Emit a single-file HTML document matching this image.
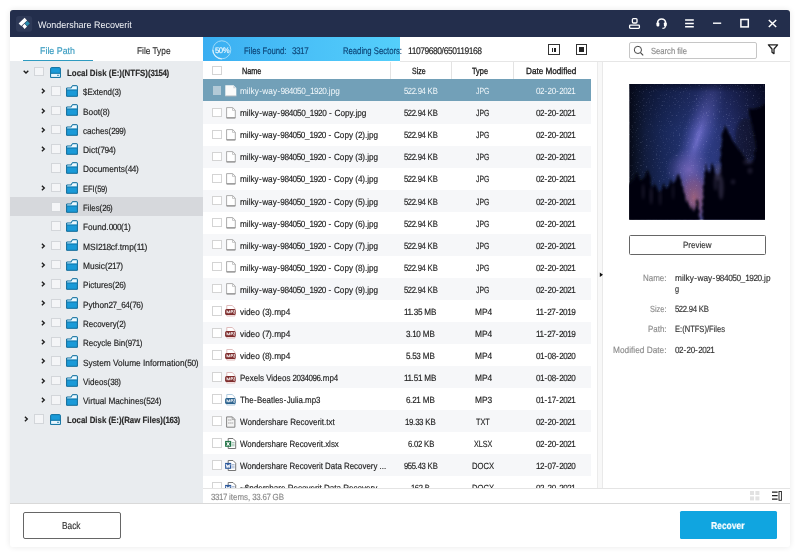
<!DOCTYPE html>
<html lang="en"><head><meta charset="utf-8"><title>Wondershare Recoverit</title>
<style>html,body{margin:0;padding:0;}body{width:800px;height:556px;overflow:hidden;background:#fff;position:relative;font-family:"Liberation Sans",sans-serif;}div,svg,i,.t,header,nav,main,aside,footer,section{position:absolute;display:block;}header,nav,main,aside,footer,section{left:0;top:0;width:0;height:0;}.t{white-space:pre;line-height:12px;text-rendering:geometricPrecision;transform-origin:0 50%;-webkit-text-stroke:0.16px;}#app{left:0;top:0;width:800px;height:556px;will-change:transform;}</style></head>
<body>
<div id="app">
<div style="left:10px;top:10px;width:780px;height:537px;background:#fff;border-radius:3px;box-shadow:0 0 6px rgba(0,0,0,.09);"></div>
<header>
<div style="left:10px;top:10px;width:780px;height:27px;background:#232e4c;border-radius:3px 3px 0 0;"></div>
<svg style="left:16px;top:16px;" width="17" height="16" viewBox="0 0 17 16"><rect x="0" y="0" width="16.2" height="15.7" rx="3" fill="#2e3957"/><path d="M8.6 1.8 L2.6 7.4 L5.3 10 L11.1 4.6 Z" fill="#fff"/><path d="M8.6 7.8 L6.2 10.2 L8.6 13 L11 10.4 Z" fill="#fff"/><path d="M11.3 5 L13.9 7.5 L11.2 10 L8.8 7.5 Z" fill="#2a8fae"/></svg>
<span class="t" style="left:38.00px;top:20px;font-size:9.5px;color:#f2f4f8;transform:scaleX(0.9415);-webkit-text-stroke:0;">Wondershare Recoverit</span>
<svg style="left:628px;top:17px;" width="13" height="13" viewBox="0 0 13 13"><rect x="4.4" y="1.6" width="4.6" height="4.4" rx="1" fill="none" stroke="#fff" stroke-width="1.3"/><rect x="1.6" y="8.2" width="9.8" height="3.2" rx="0.8" fill="none" stroke="#fff" stroke-width="1.3"/></svg>
<svg style="left:655px;top:17px;" width="13" height="13" viewBox="0 0 13 13"><path d="M2.6 8 V6 A4 4 0 0 1 10.6 6 V8" fill="none" stroke="#fff" stroke-width="1.6"/><rect x="1.5" y="5.4" width="2.8" height="4" rx="0.8" fill="#fff"/><rect x="8.9" y="5.4" width="2.8" height="4" rx="0.8" fill="#fff"/><path d="M10.4 9 Q10.4 11.4 7.4 11.4" fill="none" stroke="#fff" stroke-width="1.1"/></svg>
<svg style="left:684px;top:17px;" width="12" height="13" viewBox="0 0 12 13"><path d="M1.1 3 H9.8 M1.1 6.4 H9.8 M1.1 9.8 H9.8" stroke="#fff" stroke-width="1.5"/></svg>
<svg style="left:712px;top:17px;" width="12" height="13" viewBox="0 0 12 13"><path d="M1 6.2 H9.2" stroke="#fff" stroke-width="1.4"/></svg>
<svg style="left:739px;top:17px;" width="12" height="13" viewBox="0 0 12 13"><rect x="1.9" y="2.5" width="7.4" height="7.4" fill="none" stroke="#fff" stroke-width="1.5"/></svg>
<svg style="left:767px;top:17px;" width="12" height="13" viewBox="0 0 12 13"><path d="M1.8 3 L9.2 10 M9.2 3 L1.8 10" stroke="#fff" stroke-width="1.5"/></svg>
</header>
<nav>
<span class="t" style="left:40.00px;top:46px;font-size:9.7px;color:#3a9cc0;transform:scaleX(0.9154);">File Path</span>
<span class="t" style="left:136.55px;top:46px;font-size:9.7px;color:#333;transform:scaleX(0.8559);">File Type</span>
<div style="left:23px;top:59.5px;width:70px;height:1.8px;background:#2f9bc0;"></div>
<div style="left:10px;top:61px;width:193px;height:442.5px;background:#e9ecef;"></div>
<svg style="left:22.3px;top:68.9px;" width="8" height="6" viewBox="0 0 8 6"><path d="M1.7 1.7 L4 4 L6.3 1.7" fill="none" stroke="#1c1c1c" stroke-width="1.35"/></svg>
<div style="left:34px;top:66.9px;width:9.5px;height:9.5px;background:#f4f5f7;border:1px solid #d3d6da;box-sizing:border-box;"></div>
<svg style="left:50px;top:66.7px;" width="11" height="11" viewBox="0 0 11 11"><path d="M1.6 0.6 L9.4 0.6 Q10.4 0.6 10.4 1.6 L10.4 10.4 L0.6 10.4 L0.6 1.6 Q0.6 0.6 1.6 0.6 Z" fill="#1a9ad8" stroke="#0f6f9e" stroke-width="1"/><rect x="1.1" y="6.6" width="8.8" height="3.3" fill="#e8f6fd"/><rect x="0.6" y="5.8" width="9.8" height="0.9" fill="#0f6f9e"/><rect x="7.2" y="7.8" width="1.6" height="1" fill="#0f6f9e"/></svg>
<span class="t" style="left:66.60px;top:67px;font-size:9.0px;color:#2b2b2b;transform:scaleX(0.8791);font-weight:700;">Local Disk (E:)(NTFS)(<span style="letter-spacing:-0.50px">3154</span>)</span>
<svg style="left:39.6px;top:87.2px;" width="6" height="8" viewBox="0 0 6 8"><path d="M1.9 1.7 L4.3 4 L1.9 6.3" fill="none" stroke="#1c1c1c" stroke-width="1.35"/></svg>
<div style="left:51px;top:86.2px;width:9.5px;height:9.5px;background:#f4f5f7;border:1px solid #d3d6da;box-sizing:border-box;"></div>
<svg style="left:66px;top:85.0px;" width="12" height="12" viewBox="0 0 12 12"><path d="M0.6 3 L0.6 11.3 L11.4 11.3 L11.4 1.3 Q11.4 0.7 10.8 0.7 L6.4 0.7 L5 3 Z" fill="#1a9ad8" stroke="#0f6a98" stroke-width="1"/><path d="M1.2 3.5 L5.3 3.5 L6.7 1.3 L10.8 1.3 L10.8 4.6 L1.2 4.6 Z" fill="#eef8fd"/><path d="M1.2 4.6 L10.8 4.6 L10.8 5.5 L1.2 5.5 Z" fill="#0f6a98" opacity="0.75"/></svg>
<span class="t" style="left:82.80px;top:86px;font-size:9.0px;color:#222;transform:scaleX(0.8776);">$Extend(<span style="letter-spacing:-0.50px">3</span>)</span>
<svg style="left:39.6px;top:106.5px;" width="6" height="8" viewBox="0 0 6 8"><path d="M1.9 1.7 L4.3 4 L1.9 6.3" fill="none" stroke="#1c1c1c" stroke-width="1.35"/></svg>
<div style="left:51px;top:105.5px;width:9.5px;height:9.5px;background:#f4f5f7;border:1px solid #d3d6da;box-sizing:border-box;"></div>
<svg style="left:66px;top:104.2px;" width="12" height="12" viewBox="0 0 12 12"><path d="M0.6 3 L0.6 11.3 L11.4 11.3 L11.4 1.3 Q11.4 0.7 10.8 0.7 L6.4 0.7 L5 3 Z" fill="#1a9ad8" stroke="#0f6a98" stroke-width="1"/><path d="M1.2 3.5 L5.3 3.5 L6.7 1.3 L10.8 1.3 L10.8 4.6 L1.2 4.6 Z" fill="#eef8fd"/><path d="M1.2 4.6 L10.8 4.6 L10.8 5.5 L1.2 5.5 Z" fill="#0f6a98" opacity="0.75"/></svg>
<span class="t" style="left:82.80px;top:106px;font-size:9.0px;color:#222;transform:scaleX(0.9237);">Boot(<span style="letter-spacing:-0.50px">8</span>)</span>
<svg style="left:39.6px;top:125.8px;" width="6" height="8" viewBox="0 0 6 8"><path d="M1.9 1.7 L4.3 4 L1.9 6.3" fill="none" stroke="#1c1c1c" stroke-width="1.35"/></svg>
<div style="left:51px;top:124.8px;width:9.5px;height:9.5px;background:#f4f5f7;border:1px solid #d3d6da;box-sizing:border-box;"></div>
<svg style="left:66px;top:123.6px;" width="12" height="12" viewBox="0 0 12 12"><path d="M0.6 3 L0.6 11.3 L11.4 11.3 L11.4 1.3 Q11.4 0.7 10.8 0.7 L6.4 0.7 L5 3 Z" fill="#1a9ad8" stroke="#0f6a98" stroke-width="1"/><path d="M1.2 3.5 L5.3 3.5 L6.7 1.3 L10.8 1.3 L10.8 4.6 L1.2 4.6 Z" fill="#eef8fd"/><path d="M1.2 4.6 L10.8 4.6 L10.8 5.5 L1.2 5.5 Z" fill="#0f6a98" opacity="0.75"/></svg>
<span class="t" style="left:82.80px;top:125px;font-size:9.0px;color:#222;transform:scaleX(0.8933);">caches(<span style="letter-spacing:-0.50px">299</span>)</span>
<svg style="left:39.6px;top:145.1px;" width="6" height="8" viewBox="0 0 6 8"><path d="M1.9 1.7 L4.3 4 L1.9 6.3" fill="none" stroke="#1c1c1c" stroke-width="1.35"/></svg>
<div style="left:51px;top:144.1px;width:9.5px;height:9.5px;background:#f4f5f7;border:1px solid #d3d6da;box-sizing:border-box;"></div>
<svg style="left:66px;top:142.9px;" width="12" height="12" viewBox="0 0 12 12"><path d="M0.6 3 L0.6 11.3 L11.4 11.3 L11.4 1.3 Q11.4 0.7 10.8 0.7 L6.4 0.7 L5 3 Z" fill="#1a9ad8" stroke="#0f6a98" stroke-width="1"/><path d="M1.2 3.5 L5.3 3.5 L6.7 1.3 L10.8 1.3 L10.8 4.6 L1.2 4.6 Z" fill="#eef8fd"/><path d="M1.2 4.6 L10.8 4.6 L10.8 5.5 L1.2 5.5 Z" fill="#0f6a98" opacity="0.75"/></svg>
<span class="t" style="left:82.80px;top:144px;font-size:9.0px;color:#222;transform:scaleX(0.9340);">Dict(<span style="letter-spacing:-0.50px">794</span>)</span>
<div style="left:51px;top:163.4px;width:9.5px;height:9.5px;background:#f4f5f7;border:1px solid #d3d6da;box-sizing:border-box;"></div>
<svg style="left:66px;top:162.2px;" width="12" height="12" viewBox="0 0 12 12"><path d="M0.6 3 L0.6 11.3 L11.4 11.3 L11.4 1.3 Q11.4 0.7 10.8 0.7 L6.4 0.7 L5 3 Z" fill="#1a9ad8" stroke="#0f6a98" stroke-width="1"/><path d="M1.2 3.5 L5.3 3.5 L6.7 1.3 L10.8 1.3 L10.8 4.6 L1.2 4.6 Z" fill="#eef8fd"/><path d="M1.2 4.6 L10.8 4.6 L10.8 5.5 L1.2 5.5 Z" fill="#0f6a98" opacity="0.75"/></svg>
<span class="t" style="left:82.80px;top:163px;font-size:9.0px;color:#222;transform:scaleX(0.9202);">Documents(<span style="letter-spacing:-0.50px">44</span>)</span>
<svg style="left:39.6px;top:183.7px;" width="6" height="8" viewBox="0 0 6 8"><path d="M1.9 1.7 L4.3 4 L1.9 6.3" fill="none" stroke="#1c1c1c" stroke-width="1.35"/></svg>
<div style="left:51px;top:182.7px;width:9.5px;height:9.5px;background:#f4f5f7;border:1px solid #d3d6da;box-sizing:border-box;"></div>
<svg style="left:66px;top:181.5px;" width="12" height="12" viewBox="0 0 12 12"><path d="M0.6 3 L0.6 11.3 L11.4 11.3 L11.4 1.3 Q11.4 0.7 10.8 0.7 L6.4 0.7 L5 3 Z" fill="#1a9ad8" stroke="#0f6a98" stroke-width="1"/><path d="M1.2 3.5 L5.3 3.5 L6.7 1.3 L10.8 1.3 L10.8 4.6 L1.2 4.6 Z" fill="#eef8fd"/><path d="M1.2 4.6 L10.8 4.6 L10.8 5.5 L1.2 5.5 Z" fill="#0f6a98" opacity="0.75"/></svg>
<span class="t" style="left:82.80px;top:183px;font-size:9.0px;color:#222;transform:scaleX(0.8341);">EFI(<span style="letter-spacing:-0.50px">59</span>)</span>
<div style="left:10px;top:197.1px;width:193px;height:19.3px;background:#d6d8dc;"></div>
<div style="left:51px;top:202.0px;width:9.5px;height:9.5px;background:#f4f5f7;border:1px solid #d3d6da;box-sizing:border-box;"></div>
<svg style="left:66px;top:200.8px;" width="12" height="12" viewBox="0 0 12 12"><path d="M0.6 3 L0.6 11.3 L11.4 11.3 L11.4 1.3 Q11.4 0.7 10.8 0.7 L6.4 0.7 L5 3 Z" fill="#1a9ad8" stroke="#0f6a98" stroke-width="1"/><path d="M1.2 3.5 L5.3 3.5 L6.7 1.3 L10.8 1.3 L10.8 4.6 L1.2 4.6 Z" fill="#eef8fd"/><path d="M1.2 4.6 L10.8 4.6 L10.8 5.5 L1.2 5.5 Z" fill="#0f6a98" opacity="0.75"/></svg>
<span class="t" style="left:82.80px;top:202px;font-size:9.0px;color:#222;transform:scaleX(0.8732);">Files(<span style="letter-spacing:-0.50px">26</span>)</span>
<div style="left:51px;top:221.3px;width:9.5px;height:9.5px;background:#f4f5f7;border:1px solid #d3d6da;box-sizing:border-box;"></div>
<svg style="left:66px;top:220.1px;" width="12" height="12" viewBox="0 0 12 12"><path d="M0.6 3 L0.6 11.3 L11.4 11.3 L11.4 1.3 Q11.4 0.7 10.8 0.7 L6.4 0.7 L5 3 Z" fill="#1a9ad8" stroke="#0f6a98" stroke-width="1"/><path d="M1.2 3.5 L5.3 3.5 L6.7 1.3 L10.8 1.3 L10.8 4.6 L1.2 4.6 Z" fill="#eef8fd"/><path d="M1.2 4.6 L10.8 4.6 L10.8 5.5 L1.2 5.5 Z" fill="#0f6a98" opacity="0.75"/></svg>
<span class="t" style="left:82.80px;top:221px;font-size:9.0px;color:#222;transform:scaleX(0.9147);">Found.<span style="letter-spacing:-0.50px">000</span>(<span style="letter-spacing:-0.50px">1</span>)</span>
<svg style="left:39.6px;top:241.6px;" width="6" height="8" viewBox="0 0 6 8"><path d="M1.9 1.7 L4.3 4 L1.9 6.3" fill="none" stroke="#1c1c1c" stroke-width="1.35"/></svg>
<div style="left:51px;top:240.6px;width:9.5px;height:9.5px;background:#f4f5f7;border:1px solid #d3d6da;box-sizing:border-box;"></div>
<svg style="left:66px;top:239.4px;" width="12" height="12" viewBox="0 0 12 12"><path d="M0.6 3 L0.6 11.3 L11.4 11.3 L11.4 1.3 Q11.4 0.7 10.8 0.7 L6.4 0.7 L5 3 Z" fill="#1a9ad8" stroke="#0f6a98" stroke-width="1"/><path d="M1.2 3.5 L5.3 3.5 L6.7 1.3 L10.8 1.3 L10.8 4.6 L1.2 4.6 Z" fill="#eef8fd"/><path d="M1.2 4.6 L10.8 4.6 L10.8 5.5 L1.2 5.5 Z" fill="#0f6a98" opacity="0.75"/></svg>
<span class="t" style="left:82.80px;top:241px;font-size:9.0px;color:#222;transform:scaleX(0.9407);">MSI<span style="letter-spacing:-0.50px">218</span>cf.tmp(<span style="letter-spacing:-0.50px">11</span>)</span>
<svg style="left:39.6px;top:260.8px;" width="6" height="8" viewBox="0 0 6 8"><path d="M1.9 1.7 L4.3 4 L1.9 6.3" fill="none" stroke="#1c1c1c" stroke-width="1.35"/></svg>
<div style="left:51px;top:259.9px;width:9.5px;height:9.5px;background:#f4f5f7;border:1px solid #d3d6da;box-sizing:border-box;"></div>
<svg style="left:66px;top:258.6px;" width="12" height="12" viewBox="0 0 12 12"><path d="M0.6 3 L0.6 11.3 L11.4 11.3 L11.4 1.3 Q11.4 0.7 10.8 0.7 L6.4 0.7 L5 3 Z" fill="#1a9ad8" stroke="#0f6a98" stroke-width="1"/><path d="M1.2 3.5 L5.3 3.5 L6.7 1.3 L10.8 1.3 L10.8 4.6 L1.2 4.6 Z" fill="#eef8fd"/><path d="M1.2 4.6 L10.8 4.6 L10.8 5.5 L1.2 5.5 Z" fill="#0f6a98" opacity="0.75"/></svg>
<span class="t" style="left:82.80px;top:260px;font-size:9.0px;color:#222;transform:scaleX(0.9323);">Music(<span style="letter-spacing:-0.50px">217</span>)</span>
<svg style="left:39.6px;top:280.2px;" width="6" height="8" viewBox="0 0 6 8"><path d="M1.9 1.7 L4.3 4 L1.9 6.3" fill="none" stroke="#1c1c1c" stroke-width="1.35"/></svg>
<div style="left:51px;top:279.2px;width:9.5px;height:9.5px;background:#f4f5f7;border:1px solid #d3d6da;box-sizing:border-box;"></div>
<svg style="left:66px;top:278.0px;" width="12" height="12" viewBox="0 0 12 12"><path d="M0.6 3 L0.6 11.3 L11.4 11.3 L11.4 1.3 Q11.4 0.7 10.8 0.7 L6.4 0.7 L5 3 Z" fill="#1a9ad8" stroke="#0f6a98" stroke-width="1"/><path d="M1.2 3.5 L5.3 3.5 L6.7 1.3 L10.8 1.3 L10.8 4.6 L1.2 4.6 Z" fill="#eef8fd"/><path d="M1.2 4.6 L10.8 4.6 L10.8 5.5 L1.2 5.5 Z" fill="#0f6a98" opacity="0.75"/></svg>
<span class="t" style="left:82.80px;top:279px;font-size:9.0px;color:#222;transform:scaleX(0.9029);">Pictures(<span style="letter-spacing:-0.50px">26</span>)</span>
<svg style="left:39.6px;top:299.4px;" width="6" height="8" viewBox="0 0 6 8"><path d="M1.9 1.7 L4.3 4 L1.9 6.3" fill="none" stroke="#1c1c1c" stroke-width="1.35"/></svg>
<div style="left:51px;top:298.5px;width:9.5px;height:9.5px;background:#f4f5f7;border:1px solid #d3d6da;box-sizing:border-box;"></div>
<svg style="left:66px;top:297.2px;" width="12" height="12" viewBox="0 0 12 12"><path d="M0.6 3 L0.6 11.3 L11.4 11.3 L11.4 1.3 Q11.4 0.7 10.8 0.7 L6.4 0.7 L5 3 Z" fill="#1a9ad8" stroke="#0f6a98" stroke-width="1"/><path d="M1.2 3.5 L5.3 3.5 L6.7 1.3 L10.8 1.3 L10.8 4.6 L1.2 4.6 Z" fill="#eef8fd"/><path d="M1.2 4.6 L10.8 4.6 L10.8 5.5 L1.2 5.5 Z" fill="#0f6a98" opacity="0.75"/></svg>
<span class="t" style="left:82.80px;top:299px;font-size:9.0px;color:#222;transform:scaleX(0.9099);">Python<span style="letter-spacing:-0.50px">27</span>_<span style="letter-spacing:-0.50px">64</span>(<span style="letter-spacing:-0.50px">76</span>)</span>
<svg style="left:39.6px;top:318.8px;" width="6" height="8" viewBox="0 0 6 8"><path d="M1.9 1.7 L4.3 4 L1.9 6.3" fill="none" stroke="#1c1c1c" stroke-width="1.35"/></svg>
<div style="left:51px;top:317.8px;width:9.5px;height:9.5px;background:#f4f5f7;border:1px solid #d3d6da;box-sizing:border-box;"></div>
<svg style="left:66px;top:316.6px;" width="12" height="12" viewBox="0 0 12 12"><path d="M0.6 3 L0.6 11.3 L11.4 11.3 L11.4 1.3 Q11.4 0.7 10.8 0.7 L6.4 0.7 L5 3 Z" fill="#1a9ad8" stroke="#0f6a98" stroke-width="1"/><path d="M1.2 3.5 L5.3 3.5 L6.7 1.3 L10.8 1.3 L10.8 4.6 L1.2 4.6 Z" fill="#eef8fd"/><path d="M1.2 4.6 L10.8 4.6 L10.8 5.5 L1.2 5.5 Z" fill="#0f6a98" opacity="0.75"/></svg>
<span class="t" style="left:82.80px;top:318px;font-size:9.0px;color:#222;transform:scaleX(0.8843);">Recovery(<span style="letter-spacing:-0.50px">2</span>)</span>
<svg style="left:39.6px;top:338.1px;" width="6" height="8" viewBox="0 0 6 8"><path d="M1.9 1.7 L4.3 4 L1.9 6.3" fill="none" stroke="#1c1c1c" stroke-width="1.35"/></svg>
<div style="left:51px;top:337.1px;width:9.5px;height:9.5px;background:#f4f5f7;border:1px solid #d3d6da;box-sizing:border-box;"></div>
<svg style="left:66px;top:335.9px;" width="12" height="12" viewBox="0 0 12 12"><path d="M0.6 3 L0.6 11.3 L11.4 11.3 L11.4 1.3 Q11.4 0.7 10.8 0.7 L6.4 0.7 L5 3 Z" fill="#1a9ad8" stroke="#0f6a98" stroke-width="1"/><path d="M1.2 3.5 L5.3 3.5 L6.7 1.3 L10.8 1.3 L10.8 4.6 L1.2 4.6 Z" fill="#eef8fd"/><path d="M1.2 4.6 L10.8 4.6 L10.8 5.5 L1.2 5.5 Z" fill="#0f6a98" opacity="0.75"/></svg>
<span class="t" style="left:82.80px;top:337px;font-size:9.0px;color:#222;transform:scaleX(0.8877);">Recycle Bin(<span style="letter-spacing:-0.50px">971</span>)</span>
<svg style="left:39.6px;top:357.3px;" width="6" height="8" viewBox="0 0 6 8"><path d="M1.9 1.7 L4.3 4 L1.9 6.3" fill="none" stroke="#1c1c1c" stroke-width="1.35"/></svg>
<div style="left:51px;top:356.4px;width:9.5px;height:9.5px;background:#f4f5f7;border:1px solid #d3d6da;box-sizing:border-box;"></div>
<svg style="left:66px;top:355.1px;" width="12" height="12" viewBox="0 0 12 12"><path d="M0.6 3 L0.6 11.3 L11.4 11.3 L11.4 1.3 Q11.4 0.7 10.8 0.7 L6.4 0.7 L5 3 Z" fill="#1a9ad8" stroke="#0f6a98" stroke-width="1"/><path d="M1.2 3.5 L5.3 3.5 L6.7 1.3 L10.8 1.3 L10.8 4.6 L1.2 4.6 Z" fill="#eef8fd"/><path d="M1.2 4.6 L10.8 4.6 L10.8 5.5 L1.2 5.5 Z" fill="#0f6a98" opacity="0.75"/></svg>
<span class="t" style="left:82.80px;top:357px;font-size:9.0px;color:#222;transform:scaleX(0.9228);">System Volume Information(<span style="letter-spacing:-0.50px">50</span>)</span>
<svg style="left:39.6px;top:376.7px;" width="6" height="8" viewBox="0 0 6 8"><path d="M1.9 1.7 L4.3 4 L1.9 6.3" fill="none" stroke="#1c1c1c" stroke-width="1.35"/></svg>
<div style="left:51px;top:375.7px;width:9.5px;height:9.5px;background:#f4f5f7;border:1px solid #d3d6da;box-sizing:border-box;"></div>
<svg style="left:66px;top:374.5px;" width="12" height="12" viewBox="0 0 12 12"><path d="M0.6 3 L0.6 11.3 L11.4 11.3 L11.4 1.3 Q11.4 0.7 10.8 0.7 L6.4 0.7 L5 3 Z" fill="#1a9ad8" stroke="#0f6a98" stroke-width="1"/><path d="M1.2 3.5 L5.3 3.5 L6.7 1.3 L10.8 1.3 L10.8 4.6 L1.2 4.6 Z" fill="#eef8fd"/><path d="M1.2 4.6 L10.8 4.6 L10.8 5.5 L1.2 5.5 Z" fill="#0f6a98" opacity="0.75"/></svg>
<span class="t" style="left:82.80px;top:376px;font-size:9.0px;color:#222;transform:scaleX(0.8945);">Videos(<span style="letter-spacing:-0.50px">38</span>)</span>
<svg style="left:39.6px;top:395.9px;" width="6" height="8" viewBox="0 0 6 8"><path d="M1.9 1.7 L4.3 4 L1.9 6.3" fill="none" stroke="#1c1c1c" stroke-width="1.35"/></svg>
<div style="left:51px;top:395.0px;width:9.5px;height:9.5px;background:#f4f5f7;border:1px solid #d3d6da;box-sizing:border-box;"></div>
<svg style="left:66px;top:393.8px;" width="12" height="12" viewBox="0 0 12 12"><path d="M0.6 3 L0.6 11.3 L11.4 11.3 L11.4 1.3 Q11.4 0.7 10.8 0.7 L6.4 0.7 L5 3 Z" fill="#1a9ad8" stroke="#0f6a98" stroke-width="1"/><path d="M1.2 3.5 L5.3 3.5 L6.7 1.3 L10.8 1.3 L10.8 4.6 L1.2 4.6 Z" fill="#eef8fd"/><path d="M1.2 4.6 L10.8 4.6 L10.8 5.5 L1.2 5.5 Z" fill="#0f6a98" opacity="0.75"/></svg>
<span class="t" style="left:82.80px;top:395px;font-size:9.0px;color:#222;transform:scaleX(0.9128);">Virtual Machines(<span style="letter-spacing:-0.50px">524</span>)</span>
<svg style="left:22.6px;top:415.3px;" width="6" height="8" viewBox="0 0 6 8"><path d="M1.9 1.7 L4.3 4 L1.9 6.3" fill="none" stroke="#1c1c1c" stroke-width="1.35"/></svg>
<div style="left:34px;top:414.3px;width:9.5px;height:9.5px;background:#f4f5f7;border:1px solid #d3d6da;box-sizing:border-box;"></div>
<svg style="left:50px;top:414.1px;" width="11" height="11" viewBox="0 0 11 11"><path d="M1.6 0.6 L9.4 0.6 Q10.4 0.6 10.4 1.6 L10.4 10.4 L0.6 10.4 L0.6 1.6 Q0.6 0.6 1.6 0.6 Z" fill="#1a9ad8" stroke="#0f6f9e" stroke-width="1"/><rect x="1.1" y="6.6" width="8.8" height="3.3" fill="#e8f6fd"/><rect x="0.6" y="5.8" width="9.8" height="0.9" fill="#0f6f9e"/><rect x="7.2" y="7.8" width="1.6" height="1" fill="#0f6f9e"/></svg>
<span class="t" style="left:66.60px;top:414px;font-size:9.0px;color:#2b2b2b;transform:scaleX(0.8723);font-weight:700;">Local Disk (E:)(Raw Files)(<span style="letter-spacing:-0.50px">163</span>)</span>
</nav>
<section class="toolbar">
<div style="left:203px;top:37px;width:197px;height:24px;background:linear-gradient(90deg,#3aaef1 0%,#48bef7 45%,#54cffb 100%);"></div>
<div style="left:400px;top:61px;width:390px;height:1px;background:#e6e6e6;"></div>
<svg style="left:211px;top:39.4px;" width="22" height="22" viewBox="0 0 22 22"><circle cx="10.8" cy="10.8" r="9" fill="none" stroke="#a0dbf9" stroke-width="1"/><path d="M10.8 19.8 A9 9 0 0 1 1.8 10.8" fill="none" stroke="#d4effc" stroke-width="1.2"/></svg>
<span class="t" style="left:214.70px;top:45px;font-size:8.0px;color:#f3fbff;transform:scaleX(0.9653);"><span style="letter-spacing:-0.45px">50</span>%</span>
<span class="t" style="left:244.00px;top:46px;font-size:9.6px;color:#0c4476;transform:scaleX(0.8050);">Files Found:</span>
<span class="t" style="left:291.50px;top:46px;font-size:9.6px;color:#0c4476;transform:scaleX(0.8435);"><span style="letter-spacing:-0.53px">3317</span></span>
<span class="t" style="left:343.00px;top:46px;font-size:9.6px;color:#0c4476;transform:scaleX(0.8017);">Reading Sectors:</span>
<span class="t" style="left:407.60px;top:46px;font-size:9.6px;color:#222;transform:scaleX(0.8857);"><span style="letter-spacing:-0.53px">11079680</span>/<span style="letter-spacing:-0.53px">650119168</span></span>
<div style="left:548px;top:44px;width:11.5px;height:11px;border:1px solid #333;box-sizing:border-box;background:#fff;"><i style="left:3px;top:2.5px;width:1.3px;height:4.2px;background:#222"></i><i style="left:5.4px;top:2.5px;width:1.3px;height:4.2px;background:#222"></i></div>
<div style="left:576px;top:44px;width:11px;height:11px;border:1px solid #333;box-sizing:border-box;background:#fff;"><i style="left:2.3px;top:2.3px;width:4.4px;height:4.4px;background:#222"></i></div>
<div style="left:629px;top:42px;width:127.5px;height:17px;border:1px solid #c6c6c6;border-radius:2px;box-sizing:border-box;background:#fff;"></div>
<svg style="left:633px;top:45px;" width="12" height="12" viewBox="0 0 12 12"><circle cx="4.9" cy="4.9" r="3.6" fill="none" stroke="#444" stroke-width="1"/><path d="M7.5 7.6 L10.2 10.4" stroke="#444" stroke-width="1.1"/></svg>
<span class="t" style="left:651.00px;top:45px;font-size:9.0px;color:#8a8a8a;transform:scaleX(0.8464);">Search file</span>
<svg style="left:767px;top:43px;" width="12" height="12" viewBox="0 0 12 12"><path d="M1.4 1.8 H10.6 L7 6 V10.6 L5 9.2 V6 Z" fill="none" stroke="#222" stroke-width="1.3" stroke-linejoin="round"/></svg>
</section>
<main>
<div style="left:212px;top:65.5px;width:9.5px;height:9.5px;background:#fff;border:1px solid #d4d4d4;box-sizing:border-box;"></div>
<span class="t" style="left:241.60px;top:65px;font-size:9.0px;color:#1a1a1a;transform:scaleX(0.8078);-webkit-text-stroke:0.3px;">Name</span>
<span class="t" style="left:411.60px;top:65px;font-size:9.0px;color:#1a1a1a;transform:scaleX(0.7764);-webkit-text-stroke:0.3px;">Size</span>
<span class="t" style="left:472.30px;top:65px;font-size:9.0px;color:#1a1a1a;transform:scaleX(0.8199);-webkit-text-stroke:0.3px;">Type</span>
<span class="t" style="left:525.85px;top:65px;font-size:9.0px;color:#1a1a1a;transform:scaleX(0.9058);-webkit-text-stroke:0.3px;">Date Modified</span>
<div style="left:390px;top:62px;width:1px;height:17px;background:#e3e3e3;"></div>
<div style="left:451px;top:62px;width:1px;height:17px;background:#e3e3e3;"></div>
<div style="left:513px;top:62px;width:1px;height:17px;background:#e3e3e3;"></div>
<div style="left:0;top:0;width:800px;height:488px;overflow:hidden"><div style="left:203px;top:79px;width:388px;height:22px;background:#72a0b8;"></div><div style="left:212.5px;top:85.8px;width:8.5px;height:8.9px;background:#b3cad7;"></div><svg style="left:225px;top:84.6px;" width="12" height="12" viewBox="0 0 12 12"><path d="M0.3 0.3 L8.6 0.3 L11.3 3 L11.3 11.2 L0.3 11.2 Z" fill="#fbfbfa"/><path d="M8.4 0.5 L8.4 3.2 L11.1 3.2 Z" fill="#c9d3d9"/><path d="M0.5 11 H11.2" stroke="#7f8f99" stroke-width="0.6"/></svg><span class="t" style="left:240.00px;top:85px;font-size:9.0px;color:#f4f9fc;transform:scaleX(0.9168);-webkit-text-stroke:0;">milky<span style="margin:0 0.45px">-</span>way<span style="margin:0 0.45px">-</span><span style="letter-spacing:-0.50px">984050</span>_<span style="letter-spacing:-0.50px">1920</span>.jpg</span><span class="t" style="left:403.80px;top:85px;font-size:9.0px;color:#f4f9fc;transform:scaleX(0.8549);-webkit-text-stroke:0;"><span style="letter-spacing:-0.50px">522</span>.<span style="letter-spacing:-0.50px">94</span> KB</span><span class="t" style="left:476.25px;top:85px;font-size:9.0px;color:#f4f9fc;transform:scaleX(0.7593);-webkit-text-stroke:0;">JPG</span><span class="t" style="left:535.70px;top:85px;font-size:9.0px;color:#f4f9fc;transform:scaleX(0.8988);-webkit-text-stroke:0;"><span style="letter-spacing:-0.50px">02</span><span style="margin:0 0.45px">-</span><span style="letter-spacing:-0.50px">20</span><span style="margin:0 0.45px">-</span><span style="letter-spacing:-0.50px">2021</span></span><div style="left:203px;top:101px;width:388px;height:23px;background:#f6f7f9;"></div><div style="left:212px;top:107.5px;width:9.5px;height:9.5px;background:#fff;border:1px solid #d4d4d4;box-sizing:border-box;"></div><svg style="left:226px;top:106.9px;" width="10" height="12" viewBox="0 0 10 12"><path d="M0.6 0.6 L6.7 0.6 L9.3 3.2 L9.3 10.9 L0.6 10.9 Z" fill="#fff" stroke="#a4a4a4" stroke-width="0.9"/><path d="M6.5 0.8 L6.5 3.4 L9.1 3.4" fill="none" stroke="#b0b0b0" stroke-width="0.7"/><path d="M0.6 10.9 H9.3" stroke="#7a7a7a" stroke-width="0.9"/></svg><span class="t" style="left:240.00px;top:107px;font-size:9.0px;color:#222;transform:scaleX(0.9153);">milky<span style="margin:0 0.45px">-</span>way<span style="margin:0 0.45px">-</span><span style="letter-spacing:-0.50px">984050</span>_<span style="letter-spacing:-0.50px">1920</span> <span style="margin:0 0.45px">-</span> Copy.jpg</span><span class="t" style="left:403.80px;top:107px;font-size:9.0px;color:#222;transform:scaleX(0.8549);"><span style="letter-spacing:-0.50px">522</span>.<span style="letter-spacing:-0.50px">94</span> KB</span><span class="t" style="left:476.25px;top:107px;font-size:9.0px;color:#222;transform:scaleX(0.7593);">JPG</span><span class="t" style="left:535.70px;top:107px;font-size:9.0px;color:#222;transform:scaleX(0.8988);"><span style="letter-spacing:-0.50px">02</span><span style="margin:0 0.45px">-</span><span style="letter-spacing:-0.50px">20</span><span style="margin:0 0.45px">-</span><span style="letter-spacing:-0.50px">2021</span></span><div style="left:212px;top:129.6px;width:9.5px;height:9.5px;background:#fff;border:1px solid #d4d4d4;box-sizing:border-box;"></div><svg style="left:226px;top:128.9px;" width="10" height="12" viewBox="0 0 10 12"><path d="M0.6 0.6 L6.7 0.6 L9.3 3.2 L9.3 10.9 L0.6 10.9 Z" fill="#fff" stroke="#a4a4a4" stroke-width="0.9"/><path d="M6.5 0.8 L6.5 3.4 L9.1 3.4" fill="none" stroke="#b0b0b0" stroke-width="0.7"/><path d="M0.6 10.9 H9.3" stroke="#7a7a7a" stroke-width="0.9"/></svg><span class="t" style="left:240.00px;top:129px;font-size:9.0px;color:#222;transform:scaleX(0.9100);">milky<span style="margin:0 0.45px">-</span>way<span style="margin:0 0.45px">-</span><span style="letter-spacing:-0.50px">984050</span>_<span style="letter-spacing:-0.50px">1920</span> <span style="margin:0 0.45px">-</span> Copy (<span style="letter-spacing:-0.50px">2</span>).jpg</span><span class="t" style="left:403.80px;top:129px;font-size:9.0px;color:#222;transform:scaleX(0.8549);"><span style="letter-spacing:-0.50px">522</span>.<span style="letter-spacing:-0.50px">94</span> KB</span><span class="t" style="left:476.25px;top:129px;font-size:9.0px;color:#222;transform:scaleX(0.7593);">JPG</span><span class="t" style="left:535.70px;top:129px;font-size:9.0px;color:#222;transform:scaleX(0.8988);"><span style="letter-spacing:-0.50px">02</span><span style="margin:0 0.45px">-</span><span style="letter-spacing:-0.50px">20</span><span style="margin:0 0.45px">-</span><span style="letter-spacing:-0.50px">2021</span></span><div style="left:203px;top:146px;width:388px;height:22px;background:#f6f7f9;"></div><div style="left:212px;top:151.6px;width:9.5px;height:9.5px;background:#fff;border:1px solid #d4d4d4;box-sizing:border-box;"></div><svg style="left:226px;top:151.0px;" width="10" height="12" viewBox="0 0 10 12"><path d="M0.6 0.6 L6.7 0.6 L9.3 3.2 L9.3 10.9 L0.6 10.9 Z" fill="#fff" stroke="#a4a4a4" stroke-width="0.9"/><path d="M6.5 0.8 L6.5 3.4 L9.1 3.4" fill="none" stroke="#b0b0b0" stroke-width="0.7"/><path d="M0.6 10.9 H9.3" stroke="#7a7a7a" stroke-width="0.9"/></svg><span class="t" style="left:240.00px;top:151px;font-size:9.0px;color:#222;transform:scaleX(0.9100);">milky<span style="margin:0 0.45px">-</span>way<span style="margin:0 0.45px">-</span><span style="letter-spacing:-0.50px">984050</span>_<span style="letter-spacing:-0.50px">1920</span> <span style="margin:0 0.45px">-</span> Copy (<span style="letter-spacing:-0.50px">3</span>).jpg</span><span class="t" style="left:403.80px;top:151px;font-size:9.0px;color:#222;transform:scaleX(0.8549);"><span style="letter-spacing:-0.50px">522</span>.<span style="letter-spacing:-0.50px">94</span> KB</span><span class="t" style="left:476.25px;top:151px;font-size:9.0px;color:#222;transform:scaleX(0.7593);">JPG</span><span class="t" style="left:535.70px;top:151px;font-size:9.0px;color:#222;transform:scaleX(0.8988);"><span style="letter-spacing:-0.50px">02</span><span style="margin:0 0.45px">-</span><span style="letter-spacing:-0.50px">20</span><span style="margin:0 0.45px">-</span><span style="letter-spacing:-0.50px">2021</span></span><div style="left:212px;top:173.7px;width:9.5px;height:9.5px;background:#fff;border:1px solid #d4d4d4;box-sizing:border-box;"></div><svg style="left:226px;top:173.0px;" width="10" height="12" viewBox="0 0 10 12"><path d="M0.6 0.6 L6.7 0.6 L9.3 3.2 L9.3 10.9 L0.6 10.9 Z" fill="#fff" stroke="#a4a4a4" stroke-width="0.9"/><path d="M6.5 0.8 L6.5 3.4 L9.1 3.4" fill="none" stroke="#b0b0b0" stroke-width="0.7"/><path d="M0.6 10.9 H9.3" stroke="#7a7a7a" stroke-width="0.9"/></svg><span class="t" style="left:240.00px;top:173px;font-size:9.0px;color:#222;transform:scaleX(0.9100);">milky<span style="margin:0 0.45px">-</span>way<span style="margin:0 0.45px">-</span><span style="letter-spacing:-0.50px">984050</span>_<span style="letter-spacing:-0.50px">1920</span> <span style="margin:0 0.45px">-</span> Copy (<span style="letter-spacing:-0.50px">4</span>).jpg</span><span class="t" style="left:403.80px;top:173px;font-size:9.0px;color:#222;transform:scaleX(0.8549);"><span style="letter-spacing:-0.50px">522</span>.<span style="letter-spacing:-0.50px">94</span> KB</span><span class="t" style="left:476.25px;top:173px;font-size:9.0px;color:#222;transform:scaleX(0.7593);">JPG</span><span class="t" style="left:535.70px;top:173px;font-size:9.0px;color:#222;transform:scaleX(0.8988);"><span style="letter-spacing:-0.50px">02</span><span style="margin:0 0.45px">-</span><span style="letter-spacing:-0.50px">20</span><span style="margin:0 0.45px">-</span><span style="letter-spacing:-0.50px">2021</span></span><div style="left:203px;top:190px;width:388px;height:22px;background:#f6f7f9;"></div><div style="left:212px;top:195.7px;width:9.5px;height:9.5px;background:#fff;border:1px solid #d4d4d4;box-sizing:border-box;"></div><svg style="left:226px;top:195.1px;" width="10" height="12" viewBox="0 0 10 12"><path d="M0.6 0.6 L6.7 0.6 L9.3 3.2 L9.3 10.9 L0.6 10.9 Z" fill="#fff" stroke="#a4a4a4" stroke-width="0.9"/><path d="M6.5 0.8 L6.5 3.4 L9.1 3.4" fill="none" stroke="#b0b0b0" stroke-width="0.7"/><path d="M0.6 10.9 H9.3" stroke="#7a7a7a" stroke-width="0.9"/></svg><span class="t" style="left:240.00px;top:196px;font-size:9.0px;color:#222;transform:scaleX(0.9100);">milky<span style="margin:0 0.45px">-</span>way<span style="margin:0 0.45px">-</span><span style="letter-spacing:-0.50px">984050</span>_<span style="letter-spacing:-0.50px">1920</span> <span style="margin:0 0.45px">-</span> Copy (<span style="letter-spacing:-0.50px">5</span>).jpg</span><span class="t" style="left:403.80px;top:196px;font-size:9.0px;color:#222;transform:scaleX(0.8549);"><span style="letter-spacing:-0.50px">522</span>.<span style="letter-spacing:-0.50px">94</span> KB</span><span class="t" style="left:476.25px;top:196px;font-size:9.0px;color:#222;transform:scaleX(0.7593);">JPG</span><span class="t" style="left:535.70px;top:196px;font-size:9.0px;color:#222;transform:scaleX(0.8988);"><span style="letter-spacing:-0.50px">02</span><span style="margin:0 0.45px">-</span><span style="letter-spacing:-0.50px">20</span><span style="margin:0 0.45px">-</span><span style="letter-spacing:-0.50px">2021</span></span><div style="left:212px;top:217.8px;width:9.5px;height:9.5px;background:#fff;border:1px solid #d4d4d4;box-sizing:border-box;"></div><svg style="left:226px;top:217.1px;" width="10" height="12" viewBox="0 0 10 12"><path d="M0.6 0.6 L6.7 0.6 L9.3 3.2 L9.3 10.9 L0.6 10.9 Z" fill="#fff" stroke="#a4a4a4" stroke-width="0.9"/><path d="M6.5 0.8 L6.5 3.4 L9.1 3.4" fill="none" stroke="#b0b0b0" stroke-width="0.7"/><path d="M0.6 10.9 H9.3" stroke="#7a7a7a" stroke-width="0.9"/></svg><span class="t" style="left:240.00px;top:218px;font-size:9.0px;color:#222;transform:scaleX(0.9100);">milky<span style="margin:0 0.45px">-</span>way<span style="margin:0 0.45px">-</span><span style="letter-spacing:-0.50px">984050</span>_<span style="letter-spacing:-0.50px">1920</span> <span style="margin:0 0.45px">-</span> Copy (<span style="letter-spacing:-0.50px">6</span>).jpg</span><span class="t" style="left:403.80px;top:218px;font-size:9.0px;color:#222;transform:scaleX(0.8549);"><span style="letter-spacing:-0.50px">522</span>.<span style="letter-spacing:-0.50px">94</span> KB</span><span class="t" style="left:476.25px;top:218px;font-size:9.0px;color:#222;transform:scaleX(0.7593);">JPG</span><span class="t" style="left:535.70px;top:218px;font-size:9.0px;color:#222;transform:scaleX(0.8988);"><span style="letter-spacing:-0.50px">02</span><span style="margin:0 0.45px">-</span><span style="letter-spacing:-0.50px">20</span><span style="margin:0 0.45px">-</span><span style="letter-spacing:-0.50px">2021</span></span><div style="left:203px;top:234px;width:388px;height:22px;background:#f6f7f9;"></div><div style="left:212px;top:239.8px;width:9.5px;height:9.5px;background:#fff;border:1px solid #d4d4d4;box-sizing:border-box;"></div><svg style="left:226px;top:239.2px;" width="10" height="12" viewBox="0 0 10 12"><path d="M0.6 0.6 L6.7 0.6 L9.3 3.2 L9.3 10.9 L0.6 10.9 Z" fill="#fff" stroke="#a4a4a4" stroke-width="0.9"/><path d="M6.5 0.8 L6.5 3.4 L9.1 3.4" fill="none" stroke="#b0b0b0" stroke-width="0.7"/><path d="M0.6 10.9 H9.3" stroke="#7a7a7a" stroke-width="0.9"/></svg><span class="t" style="left:240.00px;top:240px;font-size:9.0px;color:#222;transform:scaleX(0.9100);">milky<span style="margin:0 0.45px">-</span>way<span style="margin:0 0.45px">-</span><span style="letter-spacing:-0.50px">984050</span>_<span style="letter-spacing:-0.50px">1920</span> <span style="margin:0 0.45px">-</span> Copy (<span style="letter-spacing:-0.50px">7</span>).jpg</span><span class="t" style="left:403.80px;top:240px;font-size:9.0px;color:#222;transform:scaleX(0.8549);"><span style="letter-spacing:-0.50px">522</span>.<span style="letter-spacing:-0.50px">94</span> KB</span><span class="t" style="left:476.25px;top:240px;font-size:9.0px;color:#222;transform:scaleX(0.7593);">JPG</span><span class="t" style="left:535.70px;top:240px;font-size:9.0px;color:#222;transform:scaleX(0.8988);"><span style="letter-spacing:-0.50px">02</span><span style="margin:0 0.45px">-</span><span style="letter-spacing:-0.50px">20</span><span style="margin:0 0.45px">-</span><span style="letter-spacing:-0.50px">2021</span></span><div style="left:212px;top:261.9px;width:9.5px;height:9.5px;background:#fff;border:1px solid #d4d4d4;box-sizing:border-box;"></div><svg style="left:226px;top:261.2px;" width="10" height="12" viewBox="0 0 10 12"><path d="M0.6 0.6 L6.7 0.6 L9.3 3.2 L9.3 10.9 L0.6 10.9 Z" fill="#fff" stroke="#a4a4a4" stroke-width="0.9"/><path d="M6.5 0.8 L6.5 3.4 L9.1 3.4" fill="none" stroke="#b0b0b0" stroke-width="0.7"/><path d="M0.6 10.9 H9.3" stroke="#7a7a7a" stroke-width="0.9"/></svg><span class="t" style="left:240.00px;top:262px;font-size:9.0px;color:#222;transform:scaleX(0.9100);">milky<span style="margin:0 0.45px">-</span>way<span style="margin:0 0.45px">-</span><span style="letter-spacing:-0.50px">984050</span>_<span style="letter-spacing:-0.50px">1920</span> <span style="margin:0 0.45px">-</span> Copy (<span style="letter-spacing:-0.50px">8</span>).jpg</span><span class="t" style="left:403.80px;top:262px;font-size:9.0px;color:#222;transform:scaleX(0.8549);"><span style="letter-spacing:-0.50px">522</span>.<span style="letter-spacing:-0.50px">94</span> KB</span><span class="t" style="left:476.25px;top:262px;font-size:9.0px;color:#222;transform:scaleX(0.7593);">JPG</span><span class="t" style="left:535.70px;top:262px;font-size:9.0px;color:#222;transform:scaleX(0.8988);"><span style="letter-spacing:-0.50px">02</span><span style="margin:0 0.45px">-</span><span style="letter-spacing:-0.50px">20</span><span style="margin:0 0.45px">-</span><span style="letter-spacing:-0.50px">2021</span></span><div style="left:203px;top:278px;width:388px;height:22px;background:#f6f7f9;"></div><div style="left:212px;top:283.9px;width:9.5px;height:9.5px;background:#fff;border:1px solid #d4d4d4;box-sizing:border-box;"></div><svg style="left:226px;top:283.3px;" width="10" height="12" viewBox="0 0 10 12"><path d="M0.6 0.6 L6.7 0.6 L9.3 3.2 L9.3 10.9 L0.6 10.9 Z" fill="#fff" stroke="#a4a4a4" stroke-width="0.9"/><path d="M6.5 0.8 L6.5 3.4 L9.1 3.4" fill="none" stroke="#b0b0b0" stroke-width="0.7"/><path d="M0.6 10.9 H9.3" stroke="#7a7a7a" stroke-width="0.9"/></svg><span class="t" style="left:240.00px;top:284px;font-size:9.0px;color:#222;transform:scaleX(0.9100);">milky<span style="margin:0 0.45px">-</span>way<span style="margin:0 0.45px">-</span><span style="letter-spacing:-0.50px">984050</span>_<span style="letter-spacing:-0.50px">1920</span> <span style="margin:0 0.45px">-</span> Copy (<span style="letter-spacing:-0.50px">9</span>).jpg</span><span class="t" style="left:403.80px;top:284px;font-size:9.0px;color:#222;transform:scaleX(0.8549);"><span style="letter-spacing:-0.50px">522</span>.<span style="letter-spacing:-0.50px">94</span> KB</span><span class="t" style="left:476.25px;top:284px;font-size:9.0px;color:#222;transform:scaleX(0.7593);">JPG</span><span class="t" style="left:535.70px;top:284px;font-size:9.0px;color:#222;transform:scaleX(0.8988);"><span style="letter-spacing:-0.50px">02</span><span style="margin:0 0.45px">-</span><span style="letter-spacing:-0.50px">20</span><span style="margin:0 0.45px">-</span><span style="letter-spacing:-0.50px">2021</span></span><div style="left:212px;top:306.0px;width:9.5px;height:9.5px;background:#fff;border:1px solid #d4d4d4;box-sizing:border-box;"></div><svg style="left:225.2px;top:305.3px;" width="12" height="12" viewBox="0 0 12 12"><path d="M1.8 0.5 L7.2 0.5 L9.9 3.2 L9.9 11 L1.8 11 Z" fill="#fff" stroke="#dcb4b4" stroke-width="0.9"/><rect x="0.1" y="4" width="10.6" height="5.9" rx="1.5" fill="#7e2c2c"/><path d="M2 5.6 V8.2 M2 5.6 L3.3 8.2 L4.6 5.6 V8.2 M6 5.6 V8.2 M6 5.6 H7.6 V6.9 H6 M8.6 5.6 H9.8 L8.6 8.2 H9.9" stroke="#fff" stroke-width="0.75" fill="none"/></svg><span class="t" style="left:240.00px;top:306px;font-size:9.0px;color:#222;transform:scaleX(0.9217);">video (<span style="letter-spacing:-0.50px">3</span>).mp<span style="letter-spacing:-0.50px">4</span></span><span class="t" style="left:404.45px;top:306px;font-size:9.0px;color:#222;transform:scaleX(0.9065);"><span style="letter-spacing:-0.50px">11</span>.<span style="letter-spacing:-0.50px">35</span> MB</span><span class="t" style="left:474.50px;top:306px;font-size:9.0px;color:#222;transform:scaleX(0.9326);">MP<span style="letter-spacing:-0.50px">4</span></span><span class="t" style="left:535.70px;top:306px;font-size:9.0px;color:#222;transform:scaleX(0.9128);"><span style="letter-spacing:-0.50px">11</span><span style="margin:0 0.45px">-</span><span style="letter-spacing:-0.50px">27</span><span style="margin:0 0.45px">-</span><span style="letter-spacing:-0.50px">2019</span></span><div style="left:203px;top:322px;width:388px;height:22px;background:#f6f7f9;"></div><div style="left:212px;top:328.0px;width:9.5px;height:9.5px;background:#fff;border:1px solid #d4d4d4;box-sizing:border-box;"></div><svg style="left:225.2px;top:327.4px;" width="12" height="12" viewBox="0 0 12 12"><path d="M1.8 0.5 L7.2 0.5 L9.9 3.2 L9.9 11 L1.8 11 Z" fill="#fff" stroke="#dcb4b4" stroke-width="0.9"/><rect x="0.1" y="4" width="10.6" height="5.9" rx="1.5" fill="#7e2c2c"/><path d="M2 5.6 V8.2 M2 5.6 L3.3 8.2 L4.6 5.6 V8.2 M6 5.6 V8.2 M6 5.6 H7.6 V6.9 H6 M8.6 5.6 H9.8 L8.6 8.2 H9.9" stroke="#fff" stroke-width="0.75" fill="none"/></svg><span class="t" style="left:240.00px;top:328px;font-size:9.0px;color:#222;transform:scaleX(0.9217);">video (<span style="letter-spacing:-0.50px">7</span>).mp<span style="letter-spacing:-0.50px">4</span></span><span class="t" style="left:406.30px;top:328px;font-size:9.0px;color:#222;transform:scaleX(0.8993);"><span style="letter-spacing:-0.50px">3</span>.<span style="letter-spacing:-0.50px">10</span> MB</span><span class="t" style="left:474.50px;top:328px;font-size:9.0px;color:#222;transform:scaleX(0.9326);">MP<span style="letter-spacing:-0.50px">4</span></span><span class="t" style="left:535.70px;top:328px;font-size:9.0px;color:#222;transform:scaleX(0.9128);"><span style="letter-spacing:-0.50px">11</span><span style="margin:0 0.45px">-</span><span style="letter-spacing:-0.50px">27</span><span style="margin:0 0.45px">-</span><span style="letter-spacing:-0.50px">2019</span></span><div style="left:212px;top:350.1px;width:9.5px;height:9.5px;background:#fff;border:1px solid #d4d4d4;box-sizing:border-box;"></div><svg style="left:225.2px;top:349.4px;" width="12" height="12" viewBox="0 0 12 12"><path d="M1.8 0.5 L7.2 0.5 L9.9 3.2 L9.9 11 L1.8 11 Z" fill="#fff" stroke="#dcb4b4" stroke-width="0.9"/><rect x="0.1" y="4" width="10.6" height="5.9" rx="1.5" fill="#7e2c2c"/><path d="M2 5.6 V8.2 M2 5.6 L3.3 8.2 L4.6 5.6 V8.2 M6 5.6 V8.2 M6 5.6 H7.6 V6.9 H6 M8.6 5.6 H9.8 L8.6 8.2 H9.9" stroke="#fff" stroke-width="0.75" fill="none"/></svg><span class="t" style="left:240.00px;top:350px;font-size:9.0px;color:#222;transform:scaleX(0.9217);">video (<span style="letter-spacing:-0.50px">8</span>).mp<span style="letter-spacing:-0.50px">4</span></span><span class="t" style="left:406.30px;top:350px;font-size:9.0px;color:#222;transform:scaleX(0.8993);"><span style="letter-spacing:-0.50px">5</span>.<span style="letter-spacing:-0.50px">53</span> MB</span><span class="t" style="left:474.50px;top:350px;font-size:9.0px;color:#222;transform:scaleX(0.9326);">MP<span style="letter-spacing:-0.50px">4</span></span><span class="t" style="left:535.70px;top:350px;font-size:9.0px;color:#222;transform:scaleX(0.8988);"><span style="letter-spacing:-0.50px">01</span><span style="margin:0 0.45px">-</span><span style="letter-spacing:-0.50px">08</span><span style="margin:0 0.45px">-</span><span style="letter-spacing:-0.50px">2020</span></span><div style="left:203px;top:366px;width:388px;height:22px;background:#f6f7f9;"></div><div style="left:212px;top:372.1px;width:9.5px;height:9.5px;background:#fff;border:1px solid #d4d4d4;box-sizing:border-box;"></div><svg style="left:225.2px;top:371.5px;" width="12" height="12" viewBox="0 0 12 12"><path d="M1.8 0.5 L7.2 0.5 L9.9 3.2 L9.9 11 L1.8 11 Z" fill="#fff" stroke="#dcb4b4" stroke-width="0.9"/><rect x="0.1" y="4" width="10.6" height="5.9" rx="1.5" fill="#7e2c2c"/><path d="M2 5.6 V8.2 M2 5.6 L3.3 8.2 L4.6 5.6 V8.2 M6 5.6 V8.2 M6 5.6 H7.6 V6.9 H6 M8.6 5.6 H9.8 L8.6 8.2 H9.9" stroke="#fff" stroke-width="0.75" fill="none"/></svg><span class="t" style="left:240.00px;top:372px;font-size:9.0px;color:#222;transform:scaleX(0.8858);">Pexels Videos <span style="letter-spacing:-0.50px">2034096</span>.mp<span style="letter-spacing:-0.50px">4</span></span><span class="t" style="left:404.45px;top:372px;font-size:9.0px;color:#222;transform:scaleX(0.9065);"><span style="letter-spacing:-0.50px">11</span>.<span style="letter-spacing:-0.50px">51</span> MB</span><span class="t" style="left:474.50px;top:372px;font-size:9.0px;color:#222;transform:scaleX(0.9326);">MP<span style="letter-spacing:-0.50px">4</span></span><span class="t" style="left:535.70px;top:372px;font-size:9.0px;color:#222;transform:scaleX(0.8988);"><span style="letter-spacing:-0.50px">01</span><span style="margin:0 0.45px">-</span><span style="letter-spacing:-0.50px">08</span><span style="margin:0 0.45px">-</span><span style="letter-spacing:-0.50px">2020</span></span><div style="left:212px;top:394.2px;width:9.5px;height:9.5px;background:#fff;border:1px solid #d4d4d4;box-sizing:border-box;"></div><svg style="left:225.2px;top:393.5px;" width="12" height="12" viewBox="0 0 12 12"><path d="M1.8 0.5 L7.2 0.5 L9.9 3.2 L9.9 11 L1.8 11 Z" fill="#fff" stroke="#a9c6db" stroke-width="0.9"/><rect x="0.1" y="4" width="10.6" height="5.9" rx="1.5" fill="#2b628e"/><path d="M2 5.6 V8.2 M2 5.6 L3.3 8.2 L4.6 5.6 V8.2 M6 5.6 V8.2 M6 5.6 H7.6 V6.9 H6 M8.6 5.6 H9.8 L8.6 8.2 H9.9" stroke="#fff" stroke-width="0.75" fill="none"/></svg><span class="t" style="left:240.00px;top:394px;font-size:9.0px;color:#222;transform:scaleX(0.8758);">The<span style="margin:0 0.45px">-</span>Beatles<span style="margin:0 0.45px">-</span>Julia.mp<span style="letter-spacing:-0.50px">3</span></span><span class="t" style="left:406.30px;top:394px;font-size:9.0px;color:#222;transform:scaleX(0.8993);"><span style="letter-spacing:-0.50px">6</span>.<span style="letter-spacing:-0.50px">21</span> MB</span><span class="t" style="left:474.50px;top:394px;font-size:9.0px;color:#222;transform:scaleX(0.9326);">MP<span style="letter-spacing:-0.50px">3</span></span><span class="t" style="left:535.70px;top:394px;font-size:9.0px;color:#222;transform:scaleX(0.8988);"><span style="letter-spacing:-0.50px">01</span><span style="margin:0 0.45px">-</span><span style="letter-spacing:-0.50px">17</span><span style="margin:0 0.45px">-</span><span style="letter-spacing:-0.50px">2021</span></span><div style="left:203px;top:410px;width:388px;height:22px;background:#f6f7f9;"></div><div style="left:212px;top:416.2px;width:9.5px;height:9.5px;background:#fff;border:1px solid #d4d4d4;box-sizing:border-box;"></div><svg style="left:226px;top:415.6px;" width="10" height="12" viewBox="0 0 10 12"><path d="M0.6 0.9 L6.4 0.9 L8.9 3.4 L8.9 11.2 L0.6 11.2 Z" fill="#f4f4f4" stroke="#777" stroke-width="0.9"/><path d="M6.2 1.1 L6.2 3.6 L8.7 3.6" fill="none" stroke="#888" stroke-width="0.7"/><path d="M2.2 4 H5.4 M2.2 7 H7.2" stroke="#8a8a8a" stroke-width="0.9" stroke-dasharray="1.4 0.6"/></svg><span class="t" style="left:240.00px;top:416px;font-size:9.0px;color:#222;transform:scaleX(0.8911);">Wondershare Recoverit.txt</span><span class="t" style="left:405.30px;top:416px;font-size:9.0px;color:#222;transform:scaleX(0.8794);"><span style="letter-spacing:-0.50px">19</span>.<span style="letter-spacing:-0.50px">33</span> KB</span><span class="t" style="left:476.00px;top:416px;font-size:9.0px;color:#222;transform:scaleX(0.8118);">TXT</span><span class="t" style="left:535.70px;top:416px;font-size:9.0px;color:#222;transform:scaleX(0.8988);"><span style="letter-spacing:-0.50px">02</span><span style="margin:0 0.45px">-</span><span style="letter-spacing:-0.50px">20</span><span style="margin:0 0.45px">-</span><span style="letter-spacing:-0.50px">2021</span></span><div style="left:212px;top:438.3px;width:9.5px;height:9.5px;background:#fff;border:1px solid #d4d4d4;box-sizing:border-box;"></div><svg style="left:225.2px;top:438.1px;" width="12" height="12" viewBox="0 0 12 12"><path d="M3.2 0.5 L8 0.5 L10.7 3.2 L10.7 10.5 L3.2 10.5 Z" fill="#fff" stroke="#686868" stroke-width="0.9"/><path d="M6.8 4.6 H9.6 M6.8 6.2 H9.6 M6.8 7.8 H9.6" stroke="#1f7244" stroke-opacity="0.55" stroke-width="0.8"/><rect x="0.1" y="2.9" width="6.1" height="5.9" fill="#1f7244"/><path d="M1.7 4.1 L4.5 7.7 M4.5 4.1 L1.7 7.7" stroke="#fff" stroke-width="1.05"/></svg><span class="t" style="left:240.00px;top:438px;font-size:9.0px;color:#222;transform:scaleX(0.8791);">Wondershare Recoverit.xlsx</span><span class="t" style="left:407.55px;top:438px;font-size:9.0px;color:#222;transform:scaleX(0.8615);"><span style="letter-spacing:-0.50px">6</span>.<span style="letter-spacing:-0.50px">02</span> KB</span><span class="t" style="left:473.75px;top:438px;font-size:9.0px;color:#222;transform:scaleX(0.7951);">XLSX</span><span class="t" style="left:535.70px;top:438px;font-size:9.0px;color:#222;transform:scaleX(0.8988);"><span style="letter-spacing:-0.50px">02</span><span style="margin:0 0.45px">-</span><span style="letter-spacing:-0.50px">20</span><span style="margin:0 0.45px">-</span><span style="letter-spacing:-0.50px">2021</span></span><div style="left:203px;top:454px;width:388px;height:22px;background:#f6f7f9;"></div><div style="left:212px;top:460.3px;width:9.5px;height:9.5px;background:#fff;border:1px solid #d4d4d4;box-sizing:border-box;"></div><svg style="left:225.2px;top:460.2px;" width="12" height="12" viewBox="0 0 12 12"><path d="M3.2 0.5 L8 0.5 L10.7 3.2 L10.7 10.5 L3.2 10.5 Z" fill="#fff" stroke="#686868" stroke-width="0.9"/><path d="M6.8 4.6 H9.6 M6.8 6.2 H9.6 M6.8 7.8 H9.6" stroke="#2b579a" stroke-opacity="0.55" stroke-width="0.8"/><rect x="0.1" y="2.9" width="6.1" height="5.9" fill="#2b579a"/><path d="M1.2 4.1 L2.1 7.7 L3.1 4.9 L4.1 7.7 L5 4.1" stroke="#fff" stroke-width="0.95" fill="none" stroke-linejoin="round"/></svg><span class="t" style="left:240.00px;top:460px;font-size:9.0px;color:#222;transform:scaleX(0.8786);">Wondershare Recoverit Data Recovery ...</span><span class="t" style="left:403.80px;top:460px;font-size:9.0px;color:#222;transform:scaleX(0.8549);"><span style="letter-spacing:-0.50px">955</span>.<span style="letter-spacing:-0.50px">43</span> KB</span><span class="t" style="left:471.90px;top:460px;font-size:9.0px;color:#222;transform:scaleX(0.8456);">DOCX</span><span class="t" style="left:535.70px;top:460px;font-size:9.0px;color:#222;transform:scaleX(0.8988);"><span style="letter-spacing:-0.50px">12</span><span style="margin:0 0.45px">-</span><span style="letter-spacing:-0.50px">07</span><span style="margin:0 0.45px">-</span><span style="letter-spacing:-0.50px">2020</span></span><div style="left:212px;top:482.4px;width:9.5px;height:9.5px;background:#fff;border:1px solid #d4d4d4;box-sizing:border-box;"></div><svg style="left:225.2px;top:482.2px;" width="12" height="12" viewBox="0 0 12 12"><path d="M3.2 0.5 L8 0.5 L10.7 3.2 L10.7 10.5 L3.2 10.5 Z" fill="#fff" stroke="#686868" stroke-width="0.9"/><path d="M6.8 4.6 H9.6 M6.8 6.2 H9.6 M6.8 7.8 H9.6" stroke="#2b579a" stroke-opacity="0.55" stroke-width="0.8"/><rect x="0.1" y="2.9" width="6.1" height="5.9" fill="#2b579a"/><path d="M1.2 4.1 L2.1 7.7 L3.1 4.9 L4.1 7.7 L5 4.1" stroke="#fff" stroke-width="0.95" fill="none" stroke-linejoin="round"/></svg><span class="t" style="left:240.00px;top:482px;font-size:9.0px;color:#222;transform:scaleX(0.8951);">~$ndershare Recoverit Data Recovery ...</span><span class="t" style="left:411.30px;top:482px;font-size:9.0px;color:#222;transform:scaleX(0.8535);"><span style="letter-spacing:-0.50px">162</span> B</span><span class="t" style="left:471.90px;top:482px;font-size:9.0px;color:#222;transform:scaleX(0.8456);">DOCX</span><span class="t" style="left:535.70px;top:482px;font-size:9.0px;color:#222;transform:scaleX(0.8988);"><span style="letter-spacing:-0.50px">02</span><span style="margin:0 0.45px">-</span><span style="letter-spacing:-0.50px">20</span><span style="margin:0 0.45px">-</span><span style="letter-spacing:-0.50px">2021</span></span></div>
<div style="left:203px;top:488px;width:587px;height:1px;background:#e4e4e4;"></div>
<div style="left:10px;top:503px;width:780px;height:1px;background:#d9d9d9;"></div>
<span class="t" style="left:210.50px;top:491px;font-size:9.0px;color:#8a8a8a;transform:scaleX(0.8790);"><span style="letter-spacing:-0.50px">3317</span> items, <span style="letter-spacing:-0.50px">33</span>.<span style="letter-spacing:-0.50px">67</span> GB</span>
<svg style="left:750px;top:491px;" width="10" height="10" viewBox="0 0 10 10"><rect x="0" y="0" width="4" height="4" fill="#e2e2e2"/><rect x="5.4" y="0" width="4" height="4" fill="#e2e2e2"/><rect x="0" y="5.4" width="4" height="4" fill="#e2e2e2"/><rect x="5.4" y="5.4" width="4" height="4" fill="#e2e2e2"/></svg>
<svg style="left:772px;top:491px;" width="11" height="10" viewBox="0 0 11 10"><path d="M0 1.2 H5.6 M0 4.7 H5.6 M0 8.2 H5.6" stroke="#222" stroke-width="1.2"/><rect x="7" y="0.5" width="2.4" height="8.8" fill="#fff" stroke="#222" stroke-width="0.9"/></svg>
</main>
<div style="left:597px;top:62px;width:6px;height:426px;background:#f8f8f8;border-left:1px solid #ebebeb;border-right:1px solid #e9e9e9;box-sizing:border-box;"></div>
<svg style="left:599px;top:272px;" width="5" height="6" viewBox="0 0 5 6"><path d="M0.8 0.4 L4 2.7 L0.8 5 Z" fill="#111"/></svg>
<aside>
<svg style="left:629px;top:83.8px;" width="136.2" height="135.8" viewBox="0 0 136 136"><defs><linearGradient id="sky" x1="0" y1="0" x2="1" y2="0"><stop offset="0" stop-color="#050816"/><stop offset="0.04" stop-color="#0a1124"/><stop offset="0.12" stop-color="#111c3e"/><stop offset="0.25" stop-color="#182758"/><stop offset="0.4" stop-color="#21316c"/><stop offset="0.52" stop-color="#2a397e"/><stop offset="0.62" stop-color="#2b397e"/><stop offset="0.75" stop-color="#232d68"/><stop offset="0.88" stop-color="#171e48"/><stop offset="1" stop-color="#0b0f2c"/></linearGradient><linearGradient id="vig" x1="0" y1="0" x2="0" y2="1"><stop offset="0" stop-color="#04071a" stop-opacity="0.7"/><stop offset="0.06" stop-color="#04071a" stop-opacity="0.3"/><stop offset="0.35" stop-color="#04071a" stop-opacity="0"/></linearGradient><radialGradient id="mw" cx="0.5" cy="0.5" r="0.5"><stop offset="0" stop-color="#7270cc" stop-opacity="0.9"/><stop offset="0.5" stop-color="#555ab2" stop-opacity="0.5"/><stop offset="1" stop-color="#3a4692" stop-opacity="0"/></radialGradient><radialGradient id="vi" cx="0.5" cy="0.5" r="0.5"><stop offset="0" stop-color="#7666b8" stop-opacity="0.9"/><stop offset="1" stop-color="#5a56a8" stop-opacity="0"/></radialGradient><radialGradient id="pk" cx="0.5" cy="0.5" r="0.5"><stop offset="0" stop-color="#9a607c" stop-opacity="1"/><stop offset="0.55" stop-color="#85598e" stop-opacity="0.7"/><stop offset="1" stop-color="#6a5aa8" stop-opacity="0"/></radialGradient><filter id="bl" x="-10%" y="-10%" width="120%" height="120%"><feGaussianBlur stdDeviation="0.8"/></filter><filter id="bl2" x="-50%" y="-50%" width="200%" height="200%"><feGaussianBlur stdDeviation="1.8"/></filter><filter id="gr" x="0" y="0" width="100%" height="100%"><feTurbulence type="fractalNoise" baseFrequency="0.7" numOctaves="1" seed="11" result="n"/><feColorMatrix in="n" type="matrix" values="0 0 0 0 0.7  0 0 0 0 0.75  0 0 0 0 1  0 0 0 5 -3.1"/></filter><clipPath id="pc"><rect width="136" height="136"/></clipPath></defs><g clip-path="url(#pc)"><rect width="136" height="136" fill="url(#sky)"/><g transform="rotate(17 70 50)"><ellipse cx="70" cy="50" rx="17" ry="84" fill="url(#mw)"/><ellipse cx="70" cy="58" rx="7" ry="42" fill="url(#mw)" opacity="0.6"/></g><ellipse cx="60" cy="86" rx="24" ry="22" fill="url(#vi)"/><ellipse cx="65" cy="114" rx="20" ry="30" fill="url(#pk)"/><ellipse cx="117" cy="56" rx="11" ry="22" fill="#080a1c" opacity="0.45" filter="url(#bl2)"/><rect width="136" height="136" fill="url(#vig)"/><rect width="136" height="136" filter="url(#gr)" opacity="0.2"/><path d="M-2.0 101.0 L0.9 99.5 L3.0 97.0 L5.5 94.6 L6.1 91.0 L8.6 88.6 L9.2 93.1 L11.5 97.0 L14.0 95.0 L16.3 92.4 L16.5 88.6 L18.9 86.0 L19.5 89.4 L21.2 92.5 L21.5 96.0 L21.4 100.2 L23.0 104.0 L25.1 101.2 L25.9 97.8 L26.0 101.1 L28.0 103.8 L28.5 107.0 L31.0 108.0 L32.9 105.2 L33.3 101.8 L35.0 99.0 L35.5 102.2 L37.2 105.0 L39.0 103.0 L40.9 99.0 L41.5 94.6 L43.5 100.0 L45.2 98.5 L46.9 95.6 L47.8 92.2 L49.6 89.3 L50.5 93.3 L52.3 97.0 L52.4 100.7 L54.2 104.0 L54.4 107.7 L56.0 111.0 L56.3 115.1 L57.4 119.0 L58.8 114.6 L58.8 118.5 L60.4 122.0 L62.0 126.0 L63.2 121.0 L63.5 124.6 L64.6 128.0 L66.3 124.0 L67.4 120.9 L66.8 117.7 L67.8 114.6 L68.0 111.4 L67.7 114.7 L69.3 117.7 L69.4 121.0 L69.2 124.4 L70.8 127.7 L69.3 131.3 L70.8 134.6 L70.6 138.0 L67.6 137.1 L64.5 138.6 L61.5 137.3 L58.5 138.4 L55.5 137.1 L52.4 138.7 L49.4 137.1 L46.4 138.8 L43.4 137.5 L40.3 138.5 L37.3 137.6 L34.3 138.4 L31.3 137.7 L28.2 138.5 L25.2 137.4 L22.2 138.3 L19.2 137.3 L16.1 138.5 L13.1 137.5 L10.1 138.8 L7.1 137.4 L4.0 138.5 L1.0 137.4 L-2.0 138.0Z M73.4 138.0 L74.1 134.5 L72.9 131.0 L73.9 127.5 L72.7 124.0 L74.0 120.5 L73.0 117.0 L74.7 113.5 L73.8 110.0 L74.4 106.5 L73.6 103.0 L75.3 99.6 L74.8 96.0 L75.6 92.6 L75.2 89.1 L77.0 85.9 L76.1 82.3 L77.2 79.0 L77.4 83.7 L79.2 88.0 L80.6 89.0 L81.9 85.4 L81.9 81.6 L83.2 78.0 L83.6 81.4 L85.4 84.5 L85.6 88.0 L88.5 92.0 L90.9 88.3 L91.6 84.0 L92.3 80.3 L90.8 76.7 L91.6 73.0 L92.4 69.5 L91.3 65.9 L92.7 62.5 L92.6 59.0 L93.4 55.6 L92.4 52.0 L93.4 48.6 L95.4 44.5 L95.8 40.0 L96.6 43.2 L98.5 46.0 L99.7 49.2 L101.5 52.0 L102.6 55.2 L104.5 58.0 L108.0 63.0 L109.7 65.8 L112.0 68.0 L113.6 71.3 L116.0 74.0 L117.3 77.0 L120.0 79.0 L125.0 76.0 L125.9 72.6 L125.0 68.9 L127.3 65.6 L126.8 62.0 L126.5 57.9 L125.5 54.0 L125.3 50.1 L124.0 46.4 L123.6 42.1 L122.0 38.0 L121.8 34.6 L120.3 31.4 L120.4 28.0 L119.6 24.6 L123.8 25.4 L128.0 24.4 L131.5 23.3 L134.4 20.8 L138.0 20.0 L137.6 23.3 L138.7 26.6 L137.1 29.8 L138.4 33.1 L137.7 36.4 L138.4 39.7 L137.3 42.9 L138.3 46.2 L137.6 49.5 L138.6 52.8 L137.1 56.1 L138.6 59.3 L137.4 62.6 L138.7 65.9 L137.6 69.2 L138.7 72.4 L137.6 75.7 L138.7 79.0 L137.0 82.3 L138.3 85.6 L137.3 88.8 L138.7 92.1 L137.6 95.4 L138.5 98.7 L137.0 101.9 L139.0 105.2 L137.6 108.5 L138.8 111.8 L137.0 115.1 L138.5 118.3 L137.3 121.6 L138.3 124.9 L137.4 128.2 L138.8 131.4 L137.3 134.7 L138.0 138.0Z" fill="#030308" filter="url(#bl)"/><ellipse cx="89" cy="88" rx="3.2" ry="9" fill="#5c5578" opacity="0.45" filter="url(#bl2)"/><ellipse cx="92" cy="104" rx="2.6" ry="12" fill="#5c5578" opacity="0.4" filter="url(#bl2)"/><ellipse cx="86.5" cy="99" rx="2" ry="8" fill="#5c5578" opacity="0.3" filter="url(#bl2)"/><ellipse cx="104" cy="98" rx="2.2" ry="2.6" fill="#5c5578" opacity="0.3" filter="url(#bl2)"/><ellipse cx="121" cy="87" rx="2.4" ry="3" fill="#5c5578" opacity="0.3" filter="url(#bl2)"/><ellipse cx="119" cy="78" rx="5" ry="3" fill="#5c5578" opacity="0.25" filter="url(#bl2)"/><ellipse cx="14" cy="108" rx="1.4" ry="8" fill="#5c5578" opacity="0.25" filter="url(#bl2)"/><ellipse cx="22" cy="112" rx="1.4" ry="9" fill="#5c5578" opacity="0.3" filter="url(#bl2)"/><ellipse cx="31" cy="114" rx="1.4" ry="8" fill="#5c5578" opacity="0.25" filter="url(#bl2)"/><ellipse cx="44" cy="108" rx="1.4" ry="8" fill="#5c5578" opacity="0.2" filter="url(#bl2)"/></g></svg>
<div style="left:628.5px;top:234.5px;width:137.5px;height:20.5px;border:1px solid #666;border-radius:1.5px;box-sizing:border-box;background:#fff;"></div>
<span class="t" style="left:682.75px;top:239px;font-size:9.0px;color:#333;transform:scaleX(0.8902);">Preview</span>
<span class="t" style="left:643.10px;top:272px;font-size:9.0px;color:#8c8c8c;transform:scaleX(0.8863);">Name:</span>
<span class="t" style="left:675.20px;top:272px;font-size:9.0px;color:#333;transform:scaleX(0.9196);">milky<span style="margin:0 0.45px">-</span>way<span style="margin:0 0.45px">-</span><span style="letter-spacing:-0.50px">984050</span>_<span style="letter-spacing:-0.50px">1920</span>.jp</span>
<span class="t" style="left:675.20px;top:283px;font-size:9.0px;color:#333;transform:scaleX(0.8200);">g</span>
<span class="t" style="left:650.10px;top:303px;font-size:9.0px;color:#8c8c8c;transform:scaleX(0.8244);">Size:</span>
<span class="t" style="left:675.20px;top:303px;font-size:9.0px;color:#333;transform:scaleX(0.8599);"><span style="letter-spacing:-0.50px">522</span>.<span style="letter-spacing:-0.50px">94</span> KB</span>
<span class="t" style="left:648.10px;top:323px;font-size:9.0px;color:#8c8c8c;transform:scaleX(0.8803);">Path:</span>
<span class="t" style="left:675.20px;top:323px;font-size:9.0px;color:#333;transform:scaleX(0.8403);">E:(NTFS)/Files</span>
<span class="t" style="left:613.10px;top:344px;font-size:9.0px;color:#8c8c8c;transform:scaleX(0.9219);">Modified Date:</span>
<span class="t" style="left:675.20px;top:344px;font-size:9.0px;color:#333;transform:scaleX(0.8988);"><span style="letter-spacing:-0.50px">02</span><span style="margin:0 0.45px">-</span><span style="letter-spacing:-0.50px">20</span><span style="margin:0 0.45px">-</span><span style="letter-spacing:-0.50px">2021</span></span>
</aside>
<footer>
<div style="left:23px;top:511.5px;width:97.5px;height:27px;border:1px solid #666;border-radius:2px;box-sizing:border-box;background:#fff;"></div>
<span class="t" style="left:62.25px;top:521px;font-size:10.1px;color:#333;transform:scaleX(0.8239);">Back</span>
<div style="left:680px;top:511px;width:96.5px;height:27.5px;background:#10a5e0;border-radius:1.5px;"></div>
<span class="t" style="left:711.45px;top:521px;font-size:10.1px;color:#fff;transform:scaleX(0.8408);font-weight:700;">Recover</span>
</footer>
</div>
</body></html>
